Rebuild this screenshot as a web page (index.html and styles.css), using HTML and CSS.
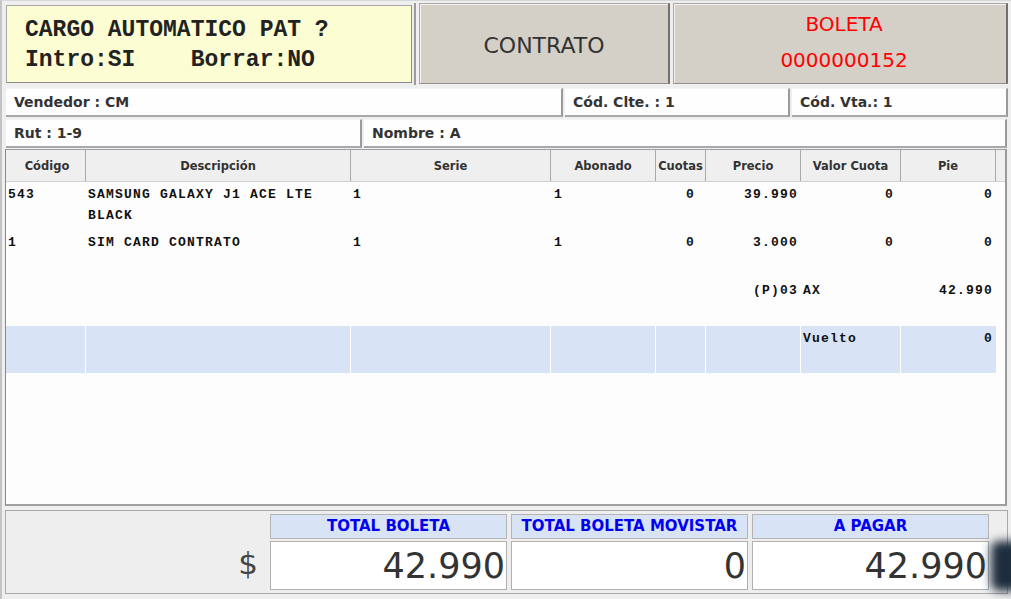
FILE: index.html
```html
<!DOCTYPE html>
<html lang="es">
<head>
<meta charset="utf-8">
<title>Boleta</title>
<link rel="stylesheet" href="styles.css">
</head>
<body>
<div class="app">
  <div class="top">
    <div class="pat-wrap">
      <div class="pat">
        <div class="pat-line">CARGO AUTOMATICO PAT ?</div>
        <div class="pat-line">Intro:SI    Borrar:NO</div>
      </div>
    </div>
    <div class="tipo">CONTRATO</div>
    <div class="doc">
      <div>BOLETA</div>
      <div>0000000152</div>
    </div>
  </div>

  <div class="fields">
    <div class="field w-vend">Vendedor : CM</div>
    <div class="field w-clte">Cód. Clte. : 1</div>
    <div class="field w-vta">Cód. Vta.: 1</div>
  </div>
  <div class="fields">
    <div class="field w-rut">Rut : 1-9</div>
    <div class="field w-nom">Nombre : A</div>
  </div>

  <div class="grid">
    <div class="thead">
      <div class="tr">
        <div class="th">Código</div>
        <div class="th">Descripción</div>
        <div class="th">Serie</div>
        <div class="th">Abonado</div>
        <div class="th">Cuotas</div>
        <div class="th">Precio</div>
        <div class="th">Valor Cuota</div>
        <div class="th">Pie</div>
      </div>
      <div class="corner"></div>
    </div>
    <div class="tbody">
      <div class="tr row">
        <div class="td">543</div>
        <div class="td">SAMSUNG GALAXY J1 ACE LTE BLACK</div>
        <div class="td">1</div>
        <div class="td c-abo">1</div>
        <div class="td num c-cuo">0</div>
        <div class="td num">39.990</div>
        <div class="td num c-val">0</div>
        <div class="td num">0</div>
      </div>
      <div class="tr row">
        <div class="td">1</div>
        <div class="td">SIM CARD CONTRATO</div>
        <div class="td">1</div>
        <div class="td c-abo">1</div>
        <div class="td num c-cuo">0</div>
        <div class="td num">3.000</div>
        <div class="td num c-val">0</div>
        <div class="td num">0</div>
      </div>
      <div class="tr row">
        <div class="td"></div>
        <div class="td"></div>
        <div class="td"></div>
        <div class="td"></div>
        <div class="td"></div>
        <div class="td num">(P)03</div>
        <div class="td">AX</div>
        <div class="td num">42.990</div>
      </div>
      <div class="tr row band">
        <div class="td"></div>
        <div class="td"></div>
        <div class="td"></div>
        <div class="td"></div>
        <div class="td"></div>
        <div class="td"></div>
        <div class="td">Vuelto</div>
        <div class="td num">0</div>
      </div>
    </div>
  </div>

  <div class="totals">
    <div class="dollar">$</div>
    <div class="tot">
      <div class="tot-h">TOTAL BOLETA</div>
      <div class="tot-v">42.990</div>
    </div>
    <div class="tot">
      <div class="tot-h">TOTAL BOLETA MOVISTAR</div>
      <div class="tot-v">0</div>
    </div>
    <div class="tot">
      <div class="tot-h">A PAGAR</div>
      <div class="tot-v">42.990</div>
    </div>
  </div>
  <div class="smudge"></div>
</div>
</body>
</html>
```

FILE: styles.css
```css
* { box-sizing: border-box; }

html, body {
  margin: 0;
  padding: 0;
  background: #ececec;
}

body {
  font-family: "DejaVu Sans", Verdana, sans-serif;
  color: #333;
}

.app {
  position: relative;
  width: 1011px;
  height: 599px;
  overflow: hidden;
  background: #efefef;
  border-left: 2px solid #c4c4c4;
  border-top: 1px solid #d8d8d8;
}

/* ---------- top ---------- */
.top {
  display: flex;
  gap: 3px;
  padding: 2px 0 0 1px;
  height: 85px;
}

.pat-wrap {
  width: 413px;
  height: 82px;
  padding: 2px 2px 2px 3px;
  border-right: 2px solid #9a9a9a;
  background: #eeeeee;
}

.pat {
  height: 78px;
  background: #fdfdd3;
  border: 1px solid #a8a8a8;
  border-right-color: #8c8c8c;
  border-bottom-color: #8c8c8c;
  padding: 9px 0 0 18px;
  font-family: "Liberation Mono", "DejaVu Sans Mono", monospace;
  font-weight: bold;
  font-size: 23px;
  color: #222;
}

.pat-line {
  white-space: pre;
  line-height: 30px;
}

.tipo, .doc {
  height: 81px;
  background: #d4d0c8;
  border: 1px solid #a6a6a6;
  border-right: 2px solid #707070;
  border-bottom: 1px solid #909090;
  box-shadow: inset 1px 1px 0 #f4f4f4;
}

.tipo {
  width: 251px;
  display: flex;
  align-items: center;
  justify-content: center;
  font-size: 22px;
  color: #333;
  padding-top: 4px;
}

.doc {
  width: 335px;
  display: flex;
  flex-direction: column;
  align-items: center;
  justify-content: center;
  gap: 12px;
  font-size: 20px;
  color: #ff0000;
  padding-left: 8px;
  padding-bottom: 4px;
}

/* ---------- fields ---------- */
.fields {
  display: flex;
  gap: 2px;
  padding: 2px 0 0 4px;
  height: 31px;
}

.field {
  height: 29px;
  background: #fefefe;
  border-right: 2px solid #9a9a9a;
  border-bottom: 2px solid #a8a8a8;
  border-top: 1px solid #f4f4f4;
  font-weight: bold;
  font-size: 14px;
  color: #333;
  padding: 5px 0 0 8px;
}

.w-vend { width: 557px; }
.w-clte { width: 225px; }
.w-vta  { width: 216px; }
.w-rut  { width: 356px; }
.w-nom  { width: 643px; }

/* ---------- grid ---------- */
.grid {
  margin: 1px 0 0 3px;
  width: 1002px;
  height: 357px;
  background: #fdfdfd;
  border: 1px solid #b8b8b8;
  border-left: 1px solid #7f8a99;
  border-top: 1px solid #9aa0a8;
  border-right: 2px solid #9a9a9a;
  border-bottom: 2px solid #a0a0a0;
}

.thead {
  display: flex;
  height: 32px;
  background: #efefef;
  border-bottom: 1px solid #d0d0d0;
}

.corner {
  flex: 1;
  background: #efefef;
}

.tr {
  display: grid;
  grid-template-columns: 80px 265px 200px 105px 50px 95px 100px 95px;
  width: 990px;
}

.th {
  border-right: 1px solid #a9a9a9;
  display: flex;
  align-items: center;
  justify-content: center;
  font-weight: bold;
  font-size: 11.5px;
  color: #333;
  padding-top: 1px;
}

.th:first-child { padding-left: 3px; }

.tbody {
  font-family: "Liberation Mono", "DejaVu Sans Mono", monospace;
  font-weight: bold;
  font-size: 13px;
  color: #111;
}

.row {
  height: 48px;
}

.td {
  padding: 2px 3px 0 2px;
  line-height: 21px;
  letter-spacing: 1.2px;
  white-space: normal;
}

.td.num { text-align: right; }
.c-abo { padding-left: 3px; }
.c-cuo { padding-right: 11px; }
.c-val { padding-right: 7px; }

.band {
  height: 47px;
}

.band .td {
  background: #d8e4f6;
  border-right: 1px solid #ffffff;
}

.band .td:last-child { border-right: 0; }

/* ---------- totals ---------- */
.totals {
  margin: 4px 0 0 3px;
  width: 1003px;
  height: 84px;
  background: #eeeeee;
  border: 1px solid #a8a8a8;
  display: flex;
  align-items: flex-start;
  padding: 3px 0 0 0;
  gap: 4px;
}

.dollar {
  width: 260px;
  text-align: right;
  padding-right: 8px;
  padding-top: 31px;
  font-size: 31px;
  color: #444;
}

.tot {
  width: 237px;
  display: flex;
  flex-direction: column;
  gap: 2px;
}

.tot-h {
  height: 25px;
  background: #d8e4f6;
  border: 1px solid #b4b4b4;
  color: #0000ee;
  font-weight: bold;
  font-size: 15px;
  text-align: center;
  line-height: 23px;
  white-space: nowrap;
}

.tot-v {
  height: 49px;
  background: #ffffff;
  border: 1px solid #b0b0b0;
  text-align: right;
  font-size: 35px;
  line-height: 49px;
  color: #333;
  padding-right: 1px;
}

.smudge {
  position: absolute;
  right: -14px;
  top: 540px;
  width: 34px;
  height: 50px;
  background: #1e2d3d;
  filter: blur(5px);
  border-radius: 8px;
}
```
